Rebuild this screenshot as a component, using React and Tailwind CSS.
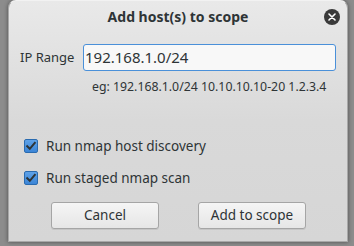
import React from "react";

function Check() {
  return (
    <div className="w-[14px] h-[14px] rounded-[2px] border border-[#2a6bb0] bg-gradient-to-b from-[#5ea2e8] to-[#3b85d6] flex items-center justify-center">
      <svg width="12" height="12" viewBox="0 0 12 12">
        <path d="M2.2 6.2 L4.8 8.8 L9.8 2.8" fill="none" stroke="#2e3436" strokeWidth="2" strokeLinecap="square" />
      </svg>
    </div>
  );
}

export default function App() {
  const font = { fontFamily: '"Noto Sans", "Open Sans", sans-serif' };
  return (
    <div className="w-[354px] h-[246px] bg-[#8c8c8c] pl-[8px] pr-[6px] pb-[4px] flex overflow-hidden" style={font}>
      <div className="flex-1 flex flex-col rounded-t-[8px] bg-gradient-to-b from-[#e9e9e9] via-[#d9d9d9] to-[#d6d6d6] shadow-[0_0_4px_rgba(0,0,0,0.45)] border border-[#a8a8a8] border-t-[#f2f2f2]">
        <div className="relative h-[31px] flex items-center justify-center">
          <span className="text-[14px] font-bold text-[#2e3436] leading-none">Add host(s) to scope</span>
          <div className="absolute right-[7px] top-[8px] w-[16px] h-[16px] rounded-full bg-[#3a3a3a] flex items-center justify-center">
            <svg width="8" height="8" viewBox="0 0 8 8">
              <path d="M1 1 L7 7 M7 1 L1 7" stroke="#ffffff" strokeWidth="1.6" strokeLinecap="round" />
            </svg>
          </div>
        </div>
        <div className="flex items-center mt-[12px] pl-[11px] pr-[11px]">
          <span className="text-[13px] text-[#2e3436] w-[63px]">IP Range</span>
          <div className="flex-1 h-[27px] border border-[#4a90d9] rounded-[3px] bg-[#f8f8f8] flex items-center px-[1px] text-[15px] text-[#2e3436]">
            192.168.1.0/24
          </div>
        </div>
        <div className="mt-[8px] pl-[83px] text-[12.3px] text-[#2e3436] leading-[16px]">
          eg: 192.168.1.0/24 10.10.10.10-20 1.2.3.4
        </div>
        <div className="mt-[44px] pl-[15px] flex flex-col gap-[18px]">
          <div className="flex items-center gap-[8px] h-[14px]">
            <Check />
            <span className="text-[13.5px] text-[#2e3436]">Run nmap host discovery</span>
          </div>
          <div className="flex items-center gap-[8px] h-[14px]">
            <Check />
            <span className="text-[13.5px] text-[#2e3436]">Run staged nmap scan</span>
          </div>
        </div>
        <div className="mt-[17px] flex pl-[42px] gap-[39px]">
          <div className="w-[108px] h-[27px] rounded-[3px] border border-[#a5a5a5] bg-gradient-to-b from-[#f5f5f5] to-[#e6e6e6] shadow-[0_1px_0_rgba(0,0,0,0.08)] flex items-center justify-center text-[13.5px] text-[#2e3436]">
            Cancel
          </div>
          <div className="w-[108px] h-[27px] rounded-[3px] border border-[#a5a5a5] bg-gradient-to-b from-[#f5f5f5] to-[#e6e6e6] shadow-[0_1px_0_rgba(0,0,0,0.08)] flex items-center justify-center text-[13.5px] text-[#2e3436]">
            Add to scope
          </div>
        </div>
      </div>
    </div>
  );
}
